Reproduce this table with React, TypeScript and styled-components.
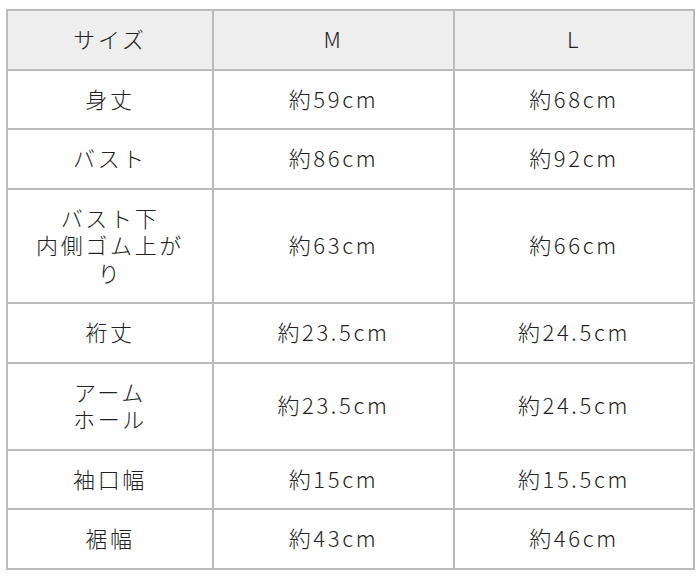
import React from "react";
import styled, { createGlobalStyle } from "styled-components";

const GlobalStyle = createGlobalStyle`
  body {
    margin: 0;
    background: #ffffff;
    font-family: "Noto Sans CJK JP", "Noto Sans", sans-serif;
    color: #222222;
  }
`;

const Page = styled.div`
  padding: 9px 5px 0 6px;
`;

const Table = styled.table`
  width: 689px;
  border-collapse: collapse;
  table-layout: fixed;
`;

const Cell = styled.td<{ $head?: boolean; $label?: boolean }>`
  border: 2px solid #bbbbbb;
  background: ${(p) => (p.$head ? "#efeeef" : "#ffffff")};
  padding: ${(p) => (p.$label ? "14px 20px 16px" : "14px 14px 16px")};
  text-align: center;
  vertical-align: middle;
  font-size: 22px;
  line-height: 27.5px;
  letter-spacing: 0.12em;
  font-weight: 300;
`;

const rows: { label: React.ReactNode; m: string; l: string }[] = [
  { label: "身丈", m: "約59cm", l: "約68cm" },
  { label: "バスト", m: "約86cm", l: "約92cm" },
  {
    label: (
      <>
        バスト下
        <br />
        内側ゴム上がり
      </>
    ),
    m: "約63cm",
    l: "約66cm",
  },
  { label: "裄丈", m: "約23.5cm", l: "約24.5cm" },
  {
    label: (
      <>
        アーム
        <br />
        ホール
      </>
    ),
    m: "約23.5cm",
    l: "約24.5cm",
  },
  { label: "袖口幅", m: "約15cm", l: "約15.5cm" },
  { label: "裾幅", m: "約43cm", l: "約46cm" },
];

export default function App() {
  return (
    <Page>
      <GlobalStyle />
      <Table>
        <colgroup>
          <col style={{ width: 206 }} />
          <col style={{ width: 241 }} />
          <col />
        </colgroup>
        <thead>
          <tr>
            <Cell as="th" $head $label>
              サイズ
            </Cell>
            <Cell as="th" $head>
              M
            </Cell>
            <Cell as="th" $head>
              L
            </Cell>
          </tr>
        </thead>
        <tbody>
          {rows.map((r, i) => (
            <tr key={i}>
              <Cell $label>{r.label}</Cell>
              <Cell>{r.m}</Cell>
              <Cell>{r.l}</Cell>
            </tr>
          ))}
        </tbody>
      </Table>
    </Page>
  );
}
